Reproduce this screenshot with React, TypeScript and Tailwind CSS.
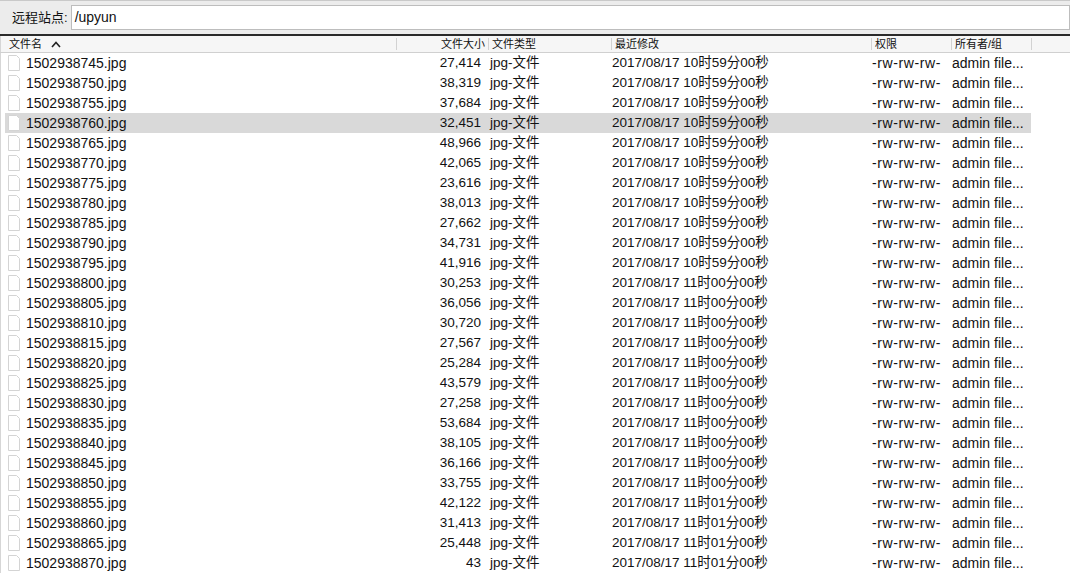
import React from 'react';

type Entry = { name: string; size: string; time: string };

const entries: Entry[] = [
  { name: '1502938745.jpg', size: '27,414', time: '2017/08/17 10时59分00秒' },
  { name: '1502938750.jpg', size: '38,319', time: '2017/08/17 10时59分00秒' },
  { name: '1502938755.jpg', size: '37,684', time: '2017/08/17 10时59分00秒' },
  { name: '1502938760.jpg', size: '32,451', time: '2017/08/17 10时59分00秒' },
  { name: '1502938765.jpg', size: '48,966', time: '2017/08/17 10时59分00秒' },
  { name: '1502938770.jpg', size: '42,065', time: '2017/08/17 10时59分00秒' },
  { name: '1502938775.jpg', size: '23,616', time: '2017/08/17 10时59分00秒' },
  { name: '1502938780.jpg', size: '38,013', time: '2017/08/17 10时59分00秒' },
  { name: '1502938785.jpg', size: '27,662', time: '2017/08/17 10时59分00秒' },
  { name: '1502938790.jpg', size: '34,731', time: '2017/08/17 10时59分00秒' },
  { name: '1502938795.jpg', size: '41,916', time: '2017/08/17 10时59分00秒' },
  { name: '1502938800.jpg', size: '30,253', time: '2017/08/17 11时00分00秒' },
  { name: '1502938805.jpg', size: '36,056', time: '2017/08/17 11时00分00秒' },
  { name: '1502938810.jpg', size: '30,720', time: '2017/08/17 11时00分00秒' },
  { name: '1502938815.jpg', size: '27,567', time: '2017/08/17 11时00分00秒' },
  { name: '1502938820.jpg', size: '25,284', time: '2017/08/17 11时00分00秒' },
  { name: '1502938825.jpg', size: '43,579', time: '2017/08/17 11时00分00秒' },
  { name: '1502938830.jpg', size: '27,258', time: '2017/08/17 11时00分00秒' },
  { name: '1502938835.jpg', size: '53,684', time: '2017/08/17 11时00分00秒' },
  { name: '1502938840.jpg', size: '38,105', time: '2017/08/17 11时00分00秒' },
  { name: '1502938845.jpg', size: '36,166', time: '2017/08/17 11时00分00秒' },
  { name: '1502938850.jpg', size: '33,755', time: '2017/08/17 11时00分00秒' },
  { name: '1502938855.jpg', size: '42,122', time: '2017/08/17 11时01分00秒' },
  { name: '1502938860.jpg', size: '31,413', time: '2017/08/17 11时01分00秒' },
  { name: '1502938865.jpg', size: '25,448', time: '2017/08/17 11时01分00秒' },
  { name: '1502938870.jpg', size: '43', time: '2017/08/17 11时01分00秒' },
];

const cols = 'grid grid-cols-[391px_92px_123px_260px_80px_80px]';

const FileIcon: React.FC = () => (
  <svg width="12" height="16" viewBox="0 0 12 16" className="shrink-0">
    <path d="M0.5 0.5h8l3 3v12h-11z" fill="#ffffff" stroke="#d4d4d4" />
  </svg>
);

const Sep: React.FC = () => <div className="h-[12px] w-px shrink-0 bg-[#d2d2d2]" />;

const HeaderCell: React.FC<{ label: string; right?: boolean; first?: boolean; children?: React.ReactNode }> = ({ label, right, first, children }) => (
  <div className="flex items-center">
    {!first && <Sep />}
    <div className={`flex flex-1 items-center ${right ? 'justify-end pr-[3px]' : first ? 'pl-[4px]' : 'pl-[3px]'}`}>
      <span>{label}</span>
      {children}
    </div>
  </div>
);

export default function App() {
  return (
    <div
      className="h-[574px] w-[1070px] overflow-hidden bg-white text-[#111]"
      style={{ fontFamily: '"Liberation Sans", "Noto Sans CJK SC", sans-serif' }}
    >
      {/* remote site bar */}
      <div className="flex h-[34px] items-center border-t border-[#c9c9c9] bg-[#ececec] pl-[12px]">
        <span className="text-[13px] leading-none">远程站点:</span>
        <div className="ml-[3px] flex h-[25px] flex-1 items-center border border-[#bdbdbd] bg-white pl-[3px] text-[14px]">
          /upyun
        </div>
      </div>
      <div className="h-[2px] bg-[#2a2a2a]" />

      {/* column header */}
      <div className="flex h-[17px] border-b border-[#d0d0d0] bg-[#f6f6f6] text-[11px] leading-none">
        <div className="w-[5px] border-l border-[#d6d6d6]" />
        <div className={`${cols} h-full`}>
          <HeaderCell label="文件名" first>
            <svg width="10" height="7" viewBox="0 0 10 7" className="ml-[9px]">
              <path d="M1 6l4-4.5L9 6" fill="none" stroke="#222" strokeWidth="1.6" />
            </svg>
          </HeaderCell>
          <HeaderCell label="文件大小" right />
          <HeaderCell label="文件类型" />
          <HeaderCell label="最近修改" />
          <HeaderCell label="权限" />
          <HeaderCell label="所有者/组" />
        </div>
        <div className="flex items-center">
          <Sep />
        </div>
      </div>

      {/* file rows */}
      <div className="flex">
        <div className="w-[5px] border-l border-[#d6d6d6]" />
        <div className="flex flex-col">
          {entries.map((e, i) => (
            <div
              key={e.name}
              className={`${cols} h-[20px] items-center text-[13.5px] leading-none ${i === 3 ? 'bg-[#d9d9d9]' : ''}`}
            >
              <div className="flex items-center pl-[3px]">
                <FileIcon />
                <span className="ml-[6px] text-[14px]">{e.name}</span>
              </div>
              <div className="pr-[7px] text-right">{e.size}</div>
              <div className="pl-[2px]">jpg-文件</div>
              <div className="pl-[1px]">{e.time}</div>
              <div className="pl-[1px] text-[14px] tracking-[0.6px]">-rw-rw-rw-</div>
              <div className="pl-[1px] text-[14px]">admin file...</div>
            </div>
          ))}
        </div>
      </div>
    </div>
  );
}
